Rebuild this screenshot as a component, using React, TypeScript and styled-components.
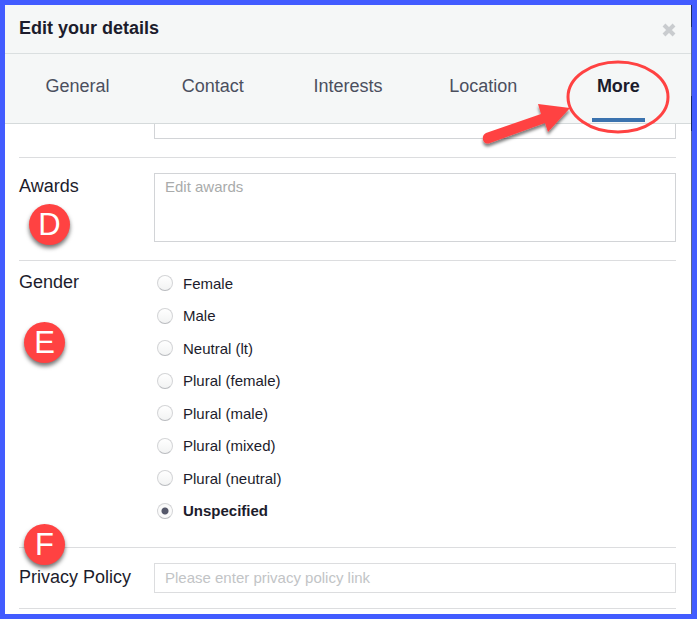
import React, { useState } from "react";
import styled, { createGlobalStyle } from "styled-components";

const GlobalStyle = createGlobalStyle`
  *, *::before, *::after { box-sizing: border-box; }
  body {
    margin: 0;
    color: #1c1c2c;
    font-family: "Liberation Sans", Arial, Helvetica, sans-serif;
  }
`;

const Dialog = styled.main`
  position: relative;
  min-height: 100vh;
  padding-right: 1px;
  border: 5px solid #425cff;
  background:
    linear-gradient(#1c2a5c 0 22px, #5a648c 22px 91px, #1c2a5c 91px 126px, #5a648c 126px)
      right top / 1px 100% no-repeat,
    #fff;
`;

const Header = styled.header`
  display: flex;
  justify-content: space-between;
  height: 49px;
  padding: 12px 15px 0 14px;
  background: #f5f7f7;
  border-bottom: 1px solid #dadfe0;
`;

const Title = styled.h1`
  margin: 0;
  font-size: 18px;
  line-height: 22px;
`;

const CloseButton = styled.button`
  display: flex;
  align-items: center;
  height: 26px;
  padding: 0;
  border: 0;
  background: none;
  color: #c9cccf;
`;

const Tabs = styled.nav`
  display: grid;
  grid-template-columns: repeat(5, 1fr);
  height: 70px;
  padding: 0 5px;
  background: #f5f7f7;
  border-bottom: 1px solid #d5dadb;
`;

const Tab = styled.button<{ $active: boolean }>`
  justify-self: center;
  padding: 0 5px;
  margin-bottom: 1px;
  border: 0;
  border-bottom: 4px solid ${(p) => (p.$active ? "#3b73af" : "transparent")};
  background: none;
  color: ${(p) => (p.$active ? "#1c1c2c" : "#4b4f5e")};
  font: ${(p) => (p.$active ? "bold" : "normal")} 18px "Liberation Sans", Arial, sans-serif;
`;

const Form = styled.form`
  padding: 0 15px 0 14px;
`;

const Row = styled.section<{ $pad: string }>`
  display: grid;
  grid-template-columns: 135px 1fr;
  padding: ${(p) => p.$pad};
  border-bottom: 1px solid #dcdddf;
`;

const LabelCell = styled.div`
  position: relative;
`;

const Label = styled.label`
  display: block;
  font-size: 18px;
  line-height: 26px;
`;

const GroupLabel = styled(Label).attrs({ as: "div" })`
  line-height: 30px;
`;

const PolicyLabel = styled(Label)`
  line-height: 28px;
`;

const Badge = styled.span<{ $left: number; $top: number }>`
  position: absolute;
  z-index: 1;
  left: ${(p) => p.$left}px;
  top: ${(p) => p.$top}px;
  width: 41px;
  height: 41px;
  border-radius: 50%;
  background: #ff4242;
  box-shadow: 0 3px 4px rgba(0, 0, 0, 0.55);
  color: #fff;
  font: 31px/41px "Liberation Sans", Arial, sans-serif;
  text-align: center;
`;

const TextArea = styled.textarea`
  display: block;
  width: 100%;
  height: 69px;
  padding: 4px 10px;
  border: 1px solid #d2d4d7;
  resize: none;
  font: 15px/17px "Liberation Sans", Arial, sans-serif;
  &::placeholder { color: #a9abab; opacity: 1; }
`;

const ScrolledArea = styled(TextArea)`
  height: 15px;
  padding: 0 10px;
  border-top: 0;
`;

const TextInput = styled.input`
  width: 100%;
  height: 30px;
  padding: 0 10px 2px;
  border: 1px solid #dcdddf;
  font: 15px "Liberation Sans", Arial, sans-serif;
  &::placeholder { color: #c2c4c6; opacity: 1; }
`;

const Options = styled.div`
  display: grid;
  grid-auto-rows: 1fr;
  height: 260px;
  padding-left: 3px;
`;

const Option = styled.label<{ $active: boolean }>`
  display: flex;
  align-items: center;
  gap: 10px;
  font-size: 15px;
  font-weight: ${(p) => (p.$active ? "bold" : "normal")};
`;

const Radio = styled.input`
  appearance: none;
  width: 16px;
  height: 16px;
  margin: 0;
  border: 1px solid #d4d5d7;
  border-bottom-color: #b9bbbf;
  border-radius: 50%;
  background: linear-gradient(#fff, #f2f3f3);
  &:checked {
    background: radial-gradient(circle, #55586a 0 3px, #fafafa 4px);
  }
`;

const Annotation = styled.svg`
  position: absolute;
  right: 11px;
  top: 50px;
  pointer-events: none;
`;

const TABS = ["General", "Contact", "Interests", "Location", "More"];
const GENDERS = [
  "Female",
  "Male",
  "Neutral (lt)",
  "Plural (female)",
  "Plural (male)",
  "Plural (mixed)",
  "Plural (neutral)",
  "Unspecified",
];

export default function App() {
  const [tab, setTab] = useState("More");
  const [gender, setGender] = useState("Unspecified");

  return (
    <Dialog>
      <GlobalStyle />
      <Header>
        <Title>Edit your details</Title>
        <CloseButton type="button" aria-label="Close">
          <svg width="14" height="14" viewBox="0 0 14 14" stroke="currentColor" strokeWidth="4">
            <path d="M2 2L12 12M12 2L2 12" />
          </svg>
        </CloseButton>
      </Header>
      <Tabs>
        {TABS.map((name) => (
          <Tab key={name} type="button" $active={name === tab} onClick={() => setTab(name)}>
            {name}
          </Tab>
        ))}
      </Tabs>
      <Form>
        <Row $pad="0 0 18px">
          <LabelCell />
          <ScrolledArea aria-label="Previous entry" />
        </Row>
        <Row $pad="15px 0 18px">
          <LabelCell>
            <Label htmlFor="awards">Awards</Label>
            <Badge $left={10} $top={31}>D</Badge>
          </LabelCell>
          <TextArea id="awards" placeholder="Edit awards" />
        </Row>
        <Row $pad="6px 0 20px">
          <LabelCell>
            <GroupLabel id="gender">Gender</GroupLabel>
            <Badge $left={5} $top={55}>E</Badge>
          </LabelCell>
          <Options role="radiogroup" aria-labelledby="gender">
            {GENDERS.map((name) => (
              <Option key={name} $active={name === gender}>
                <Radio
                  type="radio"
                  name="gender"
                  checked={name === gender}
                  onChange={() => setGender(name)}
                />
                {name}
              </Option>
            ))}
          </Options>
        </Row>
        <Row $pad="15px 0">
          <LabelCell>
            <PolicyLabel htmlFor="policy">Privacy Policy</PolicyLabel>
            <Badge $left={5} $top={-39}>F</Badge>
          </LabelCell>
          <TextInput id="policy" placeholder="Please enter privacy policy link" />
        </Row>
      </Form>
      <Annotation width="201" height="105" viewBox="481 55 201 105" fill="none" aria-hidden="true">
        <defs>
          <filter id="shade" x="-20%" y="-20%" width="140%" height="150%">
            <feDropShadow dx="0" dy="3" stdDeviation="1.5" floodOpacity="0.5" />
          </filter>
        </defs>
        <ellipse cx="619" cy="97" rx="50" ry="35" stroke="#ff4242" strokeWidth="3" />
        <path
          d="M487 133L542 114L539 104L571 108L549 132L546 123L491 143Q486 145 484 140Q483 135 487 133Z"
          fill="#ff4242"
          filter="url(#shade)"
        />
      </Annotation>
    </Dialog>
  );
}
